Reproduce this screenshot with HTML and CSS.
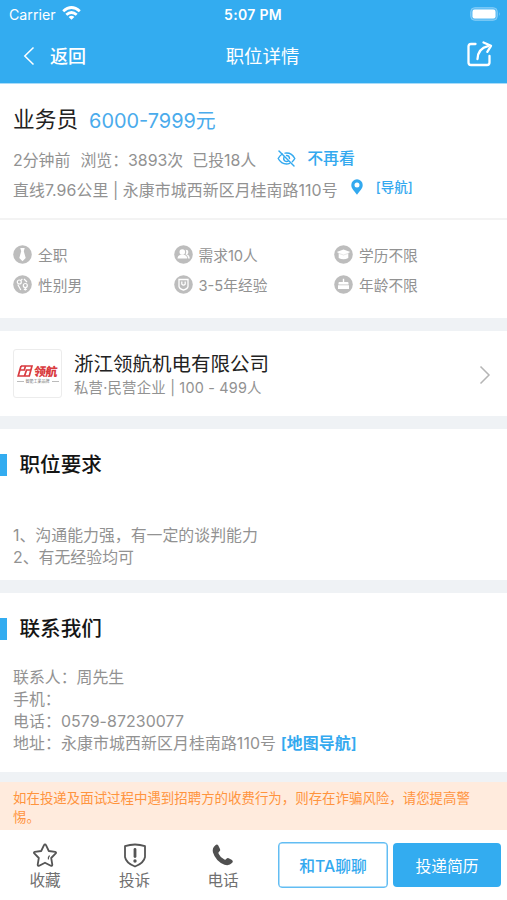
FILE: index.html
```html
<!DOCTYPE html>
<html lang="zh-CN">
<head>
<meta charset="utf-8">
<title>职位详情</title>
<link rel="stylesheet" href="styles.css">
</head>
<body>
<header class="header">
  <div class="status">
    <div class="carrier"><span>Carrier</span>
      <svg width="19" height="14" viewBox="0 0 19 14" fill="none" stroke="#fff" stroke-width="2.8"><path d="M1.200 5.200Q9.500-2.200 17.800 5.200"/><path d="M4.300 8.700Q9.500 4.200 14.700 8.700"/><path d="M9.500 13.700L6.600 10.900Q9.500 8.800 12.400 10.900Z" fill="#fff" stroke="none"/></svg>
    </div>
    <div class="clock">5:07 PM</div>
    <div class="battery"><svg width="31" height="14" viewBox="0 0 31 14"><rect x=".7" y=".7" width="26.600" height="12.600" rx="4" fill="#5fbdf4" stroke="#84cdf7"/><rect x="2.500" y="2.500" width="23" height="9" rx="2.200" fill="#fff"/><path d="M29 5q1.600 2 0 4z" fill="#84cdf7"/></svg></div>
  </div>
  <nav class="nav">
    <div class="back"><svg width="12" height="20" viewBox="0 0 12 20" fill="none" stroke="#fff" stroke-width="1.500"><path d="M10.500 1.500L1.800 10l8.700 8.500"/></svg><span>返回</span></div>
    <h1 class="nav-title">职位详情</h1>
    <svg class="share" width="27" height="27" viewBox="0 0 27 27" fill="none" stroke="#fff" stroke-width="2.300" stroke-linecap="round" stroke-linejoin="round"><path d="M9.500 4H5Q2.500 4 2.500 6.500V22.500Q2.500 25 5 25h16q2.500 0 2.500-2.500V16"/><path d="M11.500 19Q12 8.500 22 6.200"/><path d="M17.500 2.500l7.500 3.300-3.700 6"/></svg>
  </nav>
</header>

<section class="job">
  <div class="job-head"><h2>业务员</h2><span class="salary">6000-7999元</span></div>
  <div class="meta">
    <span class="ago">2分钟前</span><span class="views">浏览：3893次</span><span class="sent">已投18人</span>
    <svg width="19" height="17" viewBox="0 0 19 17" fill="none" stroke="#33a9ef" stroke-width="1.400" stroke-linecap="round"><path d="M5.300 4Q2.800 5.400 1.200 8.500q3 5.500 8.300 5.500 1.700 0 3-.6M8 3.100q6.500-1 9.800 5.400-.9 1.800-2.500 3.200"/><path d="M7.300 6.500q-1.600 3 .9 4.600 1.500.7 2.900 0M9.500 5.500q3 .1 3 3"/><path d="M2 1l15 15"/></svg>
    <b>不再看</b>
  </div>
  <div class="place">
    <span class="addr">直线7.96公里 | 永康市城西新区月桂南路110号</span>
    <svg width="12" height="16" viewBox="0 0 12 16"><path fill="#33a9ef" fill-rule="evenodd" d="M6 .3a5.700 5.700 0 0 0-5.700 5.700C.3 10 3.500 12 6 15.700 8.500 12 11.700 10 11.700 6A5.700 5.700 0 0 0 6 .3zm0 3.200a2.500 2.500 0 1 1 0 5 2.500 2.500 0 0 1 0-5z"/></svg>
    <a>[导航]</a>
  </div>
</section>

<section class="tags">
  <div class="tag"><svg width="19" height="19" viewBox="0 0 19 19"><circle cx="9.500" cy="9.500" r="9.300" fill="#bdbdbd"/><path d="M7.300 3h4.400l-.9 3.300 1.900 6.600-3.200 3.400-3.200-3.400 1.900-6.600z" fill="#fff"/></svg>全职</div>
  <div class="tag"><svg width="19" height="19" viewBox="0 0 19 19"><circle cx="9.500" cy="9.500" r="9.300" fill="#bdbdbd"/><circle cx="8.300" cy="7" r="2.800" fill="#fff"/><path d="M3.500 13.500q0-3 3.500-4h2.700q3.500 1 3.500 4zM11.500 4.700q3-.3 2.800 2.500 0 1.400-1.200 2.200 2.700.9 2.700 4.100h-1.700q0-3-2.600-4.300 1.500-2.300 0-4.500z" fill="#fff"/></svg>需求10人</div>
  <div class="tag"><svg width="19" height="19" viewBox="0 0 19 19"><circle cx="9.500" cy="9.500" r="9.300" fill="#bdbdbd"/><path d="M9.500 4.500l6.800 2.500-2 1v5q-4.800 2.500-9.600 0V8l-2-1z" fill="#fff"/><path d="M5 8.500l4.500 1.500L14 8.500" fill="none" stroke="#bdbdbd" stroke-width=".4"/></svg>学历不限</div>
  <div class="tag"><svg width="19" height="19" viewBox="0 0 19 19"><circle cx="9.500" cy="9.500" r="9.300" fill="#bdbdbd"/><g fill="none" stroke="#fff" stroke-width="1.200"><circle cx="6.300" cy="7" r="2"/><path d="M7.700 5.600l1.700-1.700M4.800 9.500l3 5.500"/><circle cx="12.300" cy="10.500" r="2"/><path d="M12.300 12.500v3M10.800 14.300h3M11 4l3 3"/></g></svg>性别男</div>
  <div class="tag"><svg width="19" height="19" viewBox="0 0 19 19"><circle cx="9.500" cy="9.500" r="9.300" fill="#bdbdbd"/><g fill="none" stroke="#fff" stroke-width="1.300"><path d="M5 4.500h9v7q-.5 2.500-4.500 3.500-4-1-4.500-3.500z"/><path d="M7.800 6.500v2.700q1.700 2 3.400 0V6.500"/></g></svg>3-5年经验</div>
  <div class="tag"><svg width="19" height="19" viewBox="0 0 19 19"><circle cx="9.500" cy="9.500" r="9.300" fill="#bdbdbd"/><path d="M8.800 3.800h1.400v3.300h3.300q1 0 1 1v1.300h-10V8.100q0-1 1-1h3.300zM4 10.200h11v3.800H4z" fill="#fff"/></svg>年龄不限</div>
</section>

<section class="company">
  <div class="logo">
    <div class="logo-main"><svg width="16" height="12" viewBox="0 0 16 12" fill="none" stroke="#d93b40" stroke-width="1.700"><path d="M4 1h11L12.300 11H1.200L4 1"/><path d="M8.500 1L7.300 5H3.200M14 5H9.500L7.500 11"/></svg><span>领航</span></div>
    <div class="logo-sub">智能工業品牌</div>
  </div>
  <div class="company-text"><h3>浙江领航机电有限公司</h3><p>私营·民营企业 | 100 - 499人</p></div>
  <svg class="chevron" width="12" height="20" viewBox="0 0 12 20" fill="none" stroke="#b5b5b5" stroke-width="1.500"><path d="M1.500 1.500L10 10l-8.500 8.500"/></svg>
</section>

<section class="block need">
  <h2 class="block-title">职位要求</h2>
  <p>1、沟通能力强，有一定的谈判能力</p>
  <p>2、有无经验均可</p>
</section>

<section class="block contact">
  <h2 class="block-title">联系我们</h2>
  <p>联系人：周先生</p>
  <p>手机：</p>
  <p class="phone">电话：0579-87230077</p>
  <p class="map">地址：永康市城西新区月桂南路110号 <b>[地图导航]</b></p>
</section>

<div class="warning">如在投递及面试过程中遇到招聘方的收费行为，则存在诈骗风险，请您提高警惕。</div>

<footer class="footer">
  <div class="action"><svg width="26" height="25" viewBox="0 0 26 25" fill="none" stroke="#555" stroke-width="1.800" stroke-linejoin="round" stroke-linecap="round"><path d="M13 1.500q.7 0 1 .7l2.800 5.800 6.400.9q1.500.4.500 1.500L19.200 15l1.100 6.700q0 1.500-1.500 1L13 19.700l-5.800 3q-1.500.5-1.500-1L6.800 15l-4.500-4.600q-1-1.100.5-1.500L9.200 8 12 2.200q.3-.7 1-.7z"/><path d="M17.300 13q-1.300 1.300-.9 3" stroke-width="1.200"/></svg><span>收藏</span></div>
  <div class="action"><svg width="26" height="25" viewBox="0 0 26 25" fill="none" stroke="#555" stroke-width="1.800" stroke-linejoin="round" stroke-linecap="round"><path d="M13 1.500q5 0 10 1.700V14q-1 6-10 9.500Q4 20 3 14V3.200Q8 1.500 13 1.500z"/><path d="M13 6.500v7" stroke-width="2.800"/><circle cx="13" cy="18" r=".8" fill="#555"/></svg><span>投诉</span></div>
  <div class="action call"><svg width="26" height="25" viewBox="0 0 26 25"><path fill="#505050" d="M6.400 2.300q1.700-1.500 2.900.2l1.800 3.700q.5 1.500-.8 2.300-1.400.9-.7 2.200 1.900 4 5.800 5.900 1.200.5 2-.8 1.100-1.300 2.300-.6l3.300 1.900q1.600 1.200.3 2.700-3.200 3.600-7.800 2Q6.700 18.200 3.900 9.200 3 5 6.400 2.300z"/></svg><span>电话</span></div>
  <div class="btn chat">和TA聊聊</div>
  <div class="btn apply">投递简历</div>
</footer>
</body>
</html>
```
FILE: styles.css
```css
* { box-sizing: border-box; margin: 0; padding: 0; }
body {
  width: 507px;
  height: 900px;
  overflow: hidden;
  display: flex;
  flex-direction: column;
  background: #eff2f5;
  font-family: Inter, "Noto Sans CJK SC", sans-serif;
  color: #929292;
  font-size: 15.900px;
  white-space: nowrap;
}
svg { display: block; flex: none; }
section { background: #fff; flex: none; }

.header { flex: none; height: 84px; background: #33acf0; color: #fff; border-bottom: 1px solid #a9dcf9; }
.status { display: grid; grid-template-columns: 1fr auto 1fr; align-items: center; height: 28px; padding: 0 6px 0 9px; }
.carrier { display: flex; align-items: center; gap: 6px; font-size: 14.200px; }
.carrier svg { margin-top: -2px; }
.clock { font-size: 14px; font-weight: 600; letter-spacing: .3px; margin-left: -4px; }
.battery { justify-self: end; }
.nav { display: grid; grid-template-columns: 1fr auto 1fr; align-items: center; height: 53px; padding: 0 14px 0 23px; }
.back { display: flex; align-items: center; gap: 15px; font-size: 18px; font-weight: 500; }
.back svg { margin-top: 2px; }
.nav-title { font-size: 18.400px; font-weight: 400; margin-left: 8px; margin-right: -1px; }
.share { justify-self: end; margin-top: -2px; }

.job { height: 136px; padding: 17px 13px 0; border-bottom: 2px solid #f3f3f3; }
.job-head { display: flex; align-items: center; height: 32px; gap: 11px; }
.job-head h2 { font-size: 21.700px; font-weight: 400; color: #222; }
.salary { color: #4aabec; font-size: 19.900px; padding-top: 4px; }
.meta { display: flex; align-items: center; height: 28px; margin-top: 12px; }
.views { margin-left: 10px; }
.sent { margin-left: 9px; }
.meta svg { margin: -1px 11px 0 21px; }
.meta b { color: #33a9ef; font-weight: 500; margin-top: -3px; }
.place { display: flex; align-items: center; height: 31px; }
.addr { letter-spacing: .08px; padding-top: 1px; }
.place svg { margin: -4px 13px 0 13px; }
.place a { color: #33a9ef; font-size: 13.500px; font-weight: 500; margin-top: -5px; }

.tags { height: 98px; padding: 19px 0 0 13px; display: grid; grid-template-columns: 160.500px 160.500px 1fr; grid-auto-rows: 30.500px; }
.tag { display: flex; align-items: center; gap: 6px; font-size: 14.700px; }

.company { height: 85px; margin-top: 13px; padding: 0 16px 0 13px; display: flex; align-items: center; }
.logo { width: 49px; height: 49px; border: 1px solid #ececec; border-radius: 3px; display: flex; flex-direction: column; align-items: center; justify-content: center; gap: 1px; }
.logo-main { display: flex; align-items: center; gap: 1px; height: 14px; color: #d93b40; font-size: 12px; font-weight: 900; letter-spacing: -.3px; }
.logo-main span { transform: skewX(-6deg); }
.logo-sub { display: flex; align-items: center; gap: 2px; height: 5px; font-size: 4px; color: #777; }
.logo-sub::before, .logo-sub::after { content: ""; width: 7px; height: 1px; background: #bbb; }
.company-text { margin: 2px auto 0 12px; }
.company h3 { font-size: 19.500px; line-height: 26px; font-weight: 400; color: #222; }
.company p { font-size: 14.400px; line-height: 21px; letter-spacing: .2px; }
.chevron { margin-top: 3px; }

.block { margin-top: 13px; padding-left: 13px; }
.block p { line-height: 22px; }
.need { height: 151px; padding-top: 25px; }
.contact { height: 179px; padding-top: 25px; }
.block-title { display: flex; align-items: center; height: 22px; line-height: 22px; margin-left: -13px; font-size: 20.600px; font-weight: 500; color: #151515; }
.block-title::before { content: ""; width: 7px; height: 22px; margin-right: 12.500px; background: #33acf0; }
.need .block-title { margin-bottom: 49px; }
.contact .block-title { margin-bottom: 27px; }
.phone { letter-spacing: .08px; }
.map { letter-spacing: .1px; }
.map b { color: #33a9ef; font-weight: 600; }

.warning { flex: none; height: 48px; margin-top: 10px; padding: 7px 30px 0 13px; background: #ffebdd; color: #ff943e; font-size: 13.450px; line-height: 18.500px; white-space: normal; }

.footer { flex: none; height: 70px; background: #fff; display: flex; align-items: flex-start; padding-top: 12px; }
.action { width: 89px; flex: none; display: flex; flex-direction: column; align-items: center; color: #707070; font-size: 15.600px; line-height: 24px; padding-top: 1px; }
.action span { margin-top: 1px; }
.action:first-child { width: 90px; }
.call { margin-left: -1px; width: 90px; }
.call svg { margin-left: -2px; }
.btn { display: flex; align-items: center; justify-content: center; height: 46px; border-radius: 4px; font-size: 15.800px; }
.chat { width: 110px; margin-left: 10px; border: 1.500px solid #62bdf3; box-shadow: inset 0 0 0 .5px #62bdf3; color: #33a9ef; font-weight: 500; }
.apply { width: 108px; height: 44px; margin: 1px 0 0 5px; background: #33acf0; color: #fff; }
```
